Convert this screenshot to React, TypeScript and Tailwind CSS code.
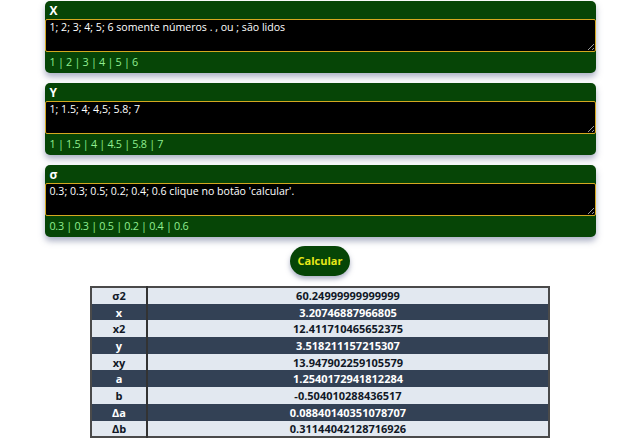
import React from 'react';

const font = { fontFamily: '"Open Sans", "Noto Sans", sans-serif' };

const fields = [
  { label: 'X', value: '1; 2; 3; 4; 5; 6 somente números . , ou ; são lidos', parsed: '1 | 2 | 3 | 4 | 5 | 6' },
  { label: 'Y', value: '1; 1.5; 4; 4,5; 5.8; 7', parsed: '1 | 1.5 | 4 | 4.5 | 5.8 | 7' },
  { label: 'σ', value: "0.3; 0.3; 0.5; 0.2; 0.4; 0.6 clique no botão 'calcular'.", parsed: '0.3 | 0.3 | 0.5 | 0.2 | 0.4 | 0.6' },
];

const results = [
  ['σ2', '60.24999999999999'],
  ['x', '3.20746887966805'],
  ['x2', '12.411710465652375'],
  ['y', '3.518211157215307'],
  ['xy', '13.947902259105579'],
  ['a', '1.2540172941812284'],
  ['b', '-0.504010288436517'],
  ['Δa', '0.08840140351078707'],
  ['Δb', '0.31144042128716926'],
];

function InputCard({ label, value, parsed }: { label: string; value: string; parsed: string }) {
  return (
    <div className="w-[551px] rounded-[5px] bg-[#064506] shadow-[0_4px_6px_rgba(90,100,140,0.5)]">
      <div className="h-[18px] px-[5px] pt-[1px] text-[12px] font-bold leading-[17px] text-white">{label}</div>
      <textarea
        defaultValue={value}
        className="block h-[33px] w-full resize-y rounded-[2px] border border-[#d4a820] bg-black px-[4px] py-0 text-[10.6px] leading-[15px] text-white outline-none"
        style={font}
      />
      <div className="flex h-[21px] items-center px-[5px] text-[10.8px] tracking-[-0.3px] text-[#90ee90]">{parsed}</div>
    </div>
  );
}

export default function App() {
  return (
    <div className="flex min-h-[440px] flex-col items-center bg-white pt-[1px]" style={font}>
      <div className="flex flex-col gap-[10px]">
        {fields.map((f) => (
          <InputCard key={f.label} {...f} />
        ))}
      </div>
      <button className="mt-[9px] h-[30px] w-[60px] rounded-full bg-[#064506] text-[11px] font-bold text-[#e8e81a] shadow-[0_3px_5px_rgba(90,100,140,0.5)]">
        Calcular
      </button>
      <table className="mt-[10px] w-[460px] border-collapse border-2 border-[#4a4a4a] text-[11px] font-bold">
        <tbody>
          {results.map(([k, v], i) => (
            <tr key={k} className={i % 2 === 0 ? 'h-[16.7px] bg-[#e2e8f0] text-[#111827]' : 'h-[16.7px] bg-[#334155] text-white'}>
              <td className="w-[56px] border-r-2 border-[#333] p-0 text-center leading-[15px]">{k}</td>
              <td className="p-0 text-center leading-[15px]">{v}</td>
            </tr>
          ))}
        </tbody>
      </table>
    </div>
  );
}
